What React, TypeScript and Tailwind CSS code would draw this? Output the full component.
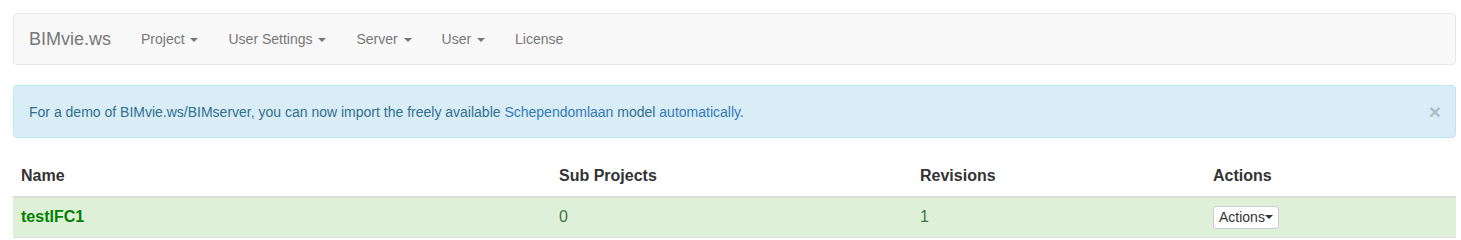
const navItems = [
  { label: 'Project', caret: true },
  { label: 'User Settings', caret: true },
  { label: 'Server', caret: true },
  { label: 'User', caret: true },
  { label: 'License', caret: false },
]

const projects = [{ name: 'testIFC1', subProjects: 0, revisions: 1 }]

function Caret({ className = '' }: { className?: string }) {
  return (
    <span
      className={
        'inline-block w-0 h-0 align-middle border-t-[4px] border-t-current border-x-[4px] border-x-transparent ' +
        className
      }
    />
  )
}

export default function App() {
  return (
    <div
      className="bg-white pl-[13px] pr-[5px] pt-[13px] text-[14px] leading-[20px] text-[#333]"
      style={{ fontFamily: '"Liberation Sans", Arial, sans-serif' }}
    >
      {/* navbar */}
      <nav className="flex items-center h-[52px] bg-[#f8f8f8] border border-[#e7e7e7] rounded-[4px] mb-[20px]">
        <span className="px-[15px] text-[18px] leading-[20px] text-[#777]">BIMvie.ws</span>
        <ul className="flex">
          {navItems.map((item) => (
            <li key={item.label} className="px-[15px] py-[15px] text-[#777]">
              {item.label}
              {item.caret && (
                <>
                  {' '}
                  <Caret className="ml-[2px]" />
                </>
              )}
            </li>
          ))}
        </ul>
      </nav>

      {/* alert */}
      <div className="flex items-center justify-between bg-[#d9edf7] border border-[#bce8f1] rounded-[4px] text-[#31708f] pl-[15px] pr-[14px] py-[15px] mb-[19px]">
        <p>
          For a demo of BIMvie.ws/BIMserver, you can now import the freely available{' '}
          <a className="text-[#337ab7]">Schependomlaan</a> model{' '}
          <a className="text-[#337ab7]">automatically</a>.
        </p>
        <button className="text-[21px] font-bold leading-none text-black opacity-20">×</button>
      </div>

      {/* projects table */}
      <table className="w-full border-collapse text-[16px] leading-[22.86px]">
        <colgroup>
          <col className="w-[538px]" />
          <col className="w-[361px]" />
          <col className="w-[293px]" />
          <col />
        </colgroup>
        <thead>
          <tr className="border-b-2 border-[#ddd] text-left">
            <th className="p-[8px] font-bold">Name</th>
            <th className="p-[8px] font-bold">Sub Projects</th>
            <th className="p-[8px] font-bold">Revisions</th>
            <th className="p-[8px] font-bold">Actions</th>
          </tr>
        </thead>
        <tbody>
          {projects.map((p) => (
            <tr key={p.name} className="bg-[#dff0d8] border-b border-[#ddd]">
              <td className="p-[8px] font-bold text-[#008000]">{p.name}</td>
              <td className="p-[8px] text-[#3c763d]">{p.subProjects}</td>
              <td className="p-[8px] text-[#3c763d]">{p.revisions}</td>
              <td className="p-[8px]">
                <button className="inline-flex items-center h-[23px] px-[5px] bg-white border border-[#ccc] rounded-[3px] text-[14px] leading-[18px] text-[#333]">
                  Actions
                  <Caret />
                </button>
              </td>
            </tr>
          ))}
        </tbody>
      </table>
    </div>
  )
}
